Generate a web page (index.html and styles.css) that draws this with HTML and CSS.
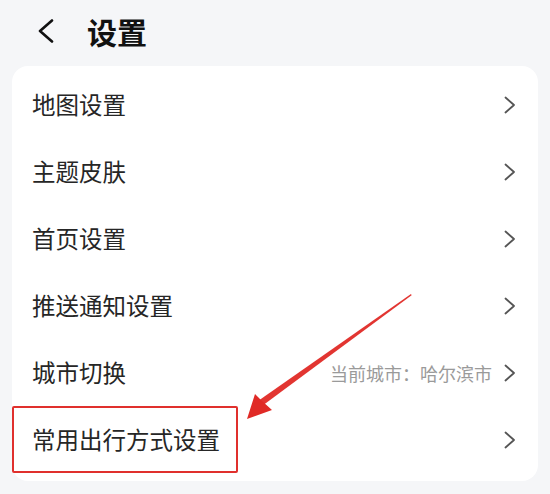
FILE: index.html
```html
<!DOCTYPE html>
<html lang="zh-CN">
<head>
<meta charset="utf-8">
<link rel="stylesheet" href="styles.css">
</head>
<body>
<div class="page">
  <header class="header">
    <svg class="back" width="18" height="24" viewBox="0 0 18 24"><path d="M15 1.5 L3 12 L15 22.5" fill="none" stroke="#111" stroke-width="2.6" stroke-linecap="round" stroke-linejoin="round"/></svg>
    <h1 class="title">设置</h1>
  </header>
  <div class="card">
    <div class="row"><span class="label">地图设置</span><span class="right"><svg class="chev" width="12" height="18" viewBox="0 0 12 18"><path d="M1.5 1.5 L10 9 L1.5 16.5" fill="none" stroke="#555" stroke-width="1.8" stroke-linecap="round" stroke-linejoin="round"/></svg></span></div>
    <div class="row"><span class="label">主题皮肤</span><span class="right"><svg class="chev" width="12" height="18" viewBox="0 0 12 18"><path d="M1.5 1.5 L10 9 L1.5 16.5" fill="none" stroke="#555" stroke-width="1.8" stroke-linecap="round" stroke-linejoin="round"/></svg></span></div>
    <div class="row"><span class="label">首页设置</span><span class="right"><svg class="chev" width="12" height="18" viewBox="0 0 12 18"><path d="M1.5 1.5 L10 9 L1.5 16.5" fill="none" stroke="#555" stroke-width="1.8" stroke-linecap="round" stroke-linejoin="round"/></svg></span></div>
    <div class="row"><span class="label">推送通知设置</span><span class="right"><svg class="chev" width="12" height="18" viewBox="0 0 12 18"><path d="M1.5 1.5 L10 9 L1.5 16.5" fill="none" stroke="#555" stroke-width="1.8" stroke-linecap="round" stroke-linejoin="round"/></svg></span></div>
    <div class="row"><span class="label">城市切换</span><span class="right"><span class="sub">当前城市：哈尔滨市</span><svg class="chev" width="12" height="18" viewBox="0 0 12 18"><path d="M1.5 1.5 L10 9 L1.5 16.5" fill="none" stroke="#555" stroke-width="1.8" stroke-linecap="round" stroke-linejoin="round"/></svg></span></div>
    <div class="row row-last"><span class="label">常用出行方式设置</span><span class="right"><svg class="chev" width="12" height="18" viewBox="0 0 12 18"><path d="M1.5 1.5 L10 9 L1.5 16.5" fill="none" stroke="#555" stroke-width="1.8" stroke-linecap="round" stroke-linejoin="round"/></svg></span><span class="highlight"></span></div>
  </div>
  <svg class="arrow" width="550" height="494" viewBox="0 0 550 494">
    <polygon points="411,294 411.6,295.2 262,406 258,401" fill="#e02a26" opacity="0.95"/>
    <polygon points="247,419 255,394 262,401 272,410" fill="#e02a26"/>
  </svg>
</div>
</body>
</html>
```
FILE: styles.css
```css
* { box-sizing: border-box; }
html, body { margin: 0; padding: 0; }
body {
  background: #f5f6f8;
  font-family: "Noto Sans CJK SC", "Noto Sans", sans-serif;
  width: 550px;
  height: 494px;
  overflow: hidden;
}
.page { position: relative; width: 550px; height: 494px; }
.header {
  height: 66px;
  display: flex;
  align-items: center;
  padding-left: 37px;
  padding-bottom: 4px;
}
.back { display: block; margin-right: 32px; }
.title {
  margin: 0;
  font-size: 30px;
  font-weight: 700;
  color: #111;
  line-height: 1;
}
.card {
  margin: 0 12px;
  width: 526px;
  background: #fff;
  border-radius: 16px;
  padding: 5px 0 8px;
}
.row {
  position: relative;
  height: 67px;
  display: flex;
  align-items: center;
  justify-content: space-between;
  padding: 0 22px 0 20px;
}
.label {
  font-size: 23.5px;
  color: #262626;
  line-height: 1;
}
.right { display: flex; align-items: center; }
.sub {
  font-size: 18px;
  color: #9a9a9a;
  margin-right: 12px;
}
.chev { display: block; }
.highlight {
  position: absolute;
  left: 0;
  top: 0;
  width: 226px;
  height: 67px;
  border: 2px solid #e0302d;
  border-radius: 2px;
}
.arrow { position: absolute; left: 0; top: 0; pointer-events: none; }
```
